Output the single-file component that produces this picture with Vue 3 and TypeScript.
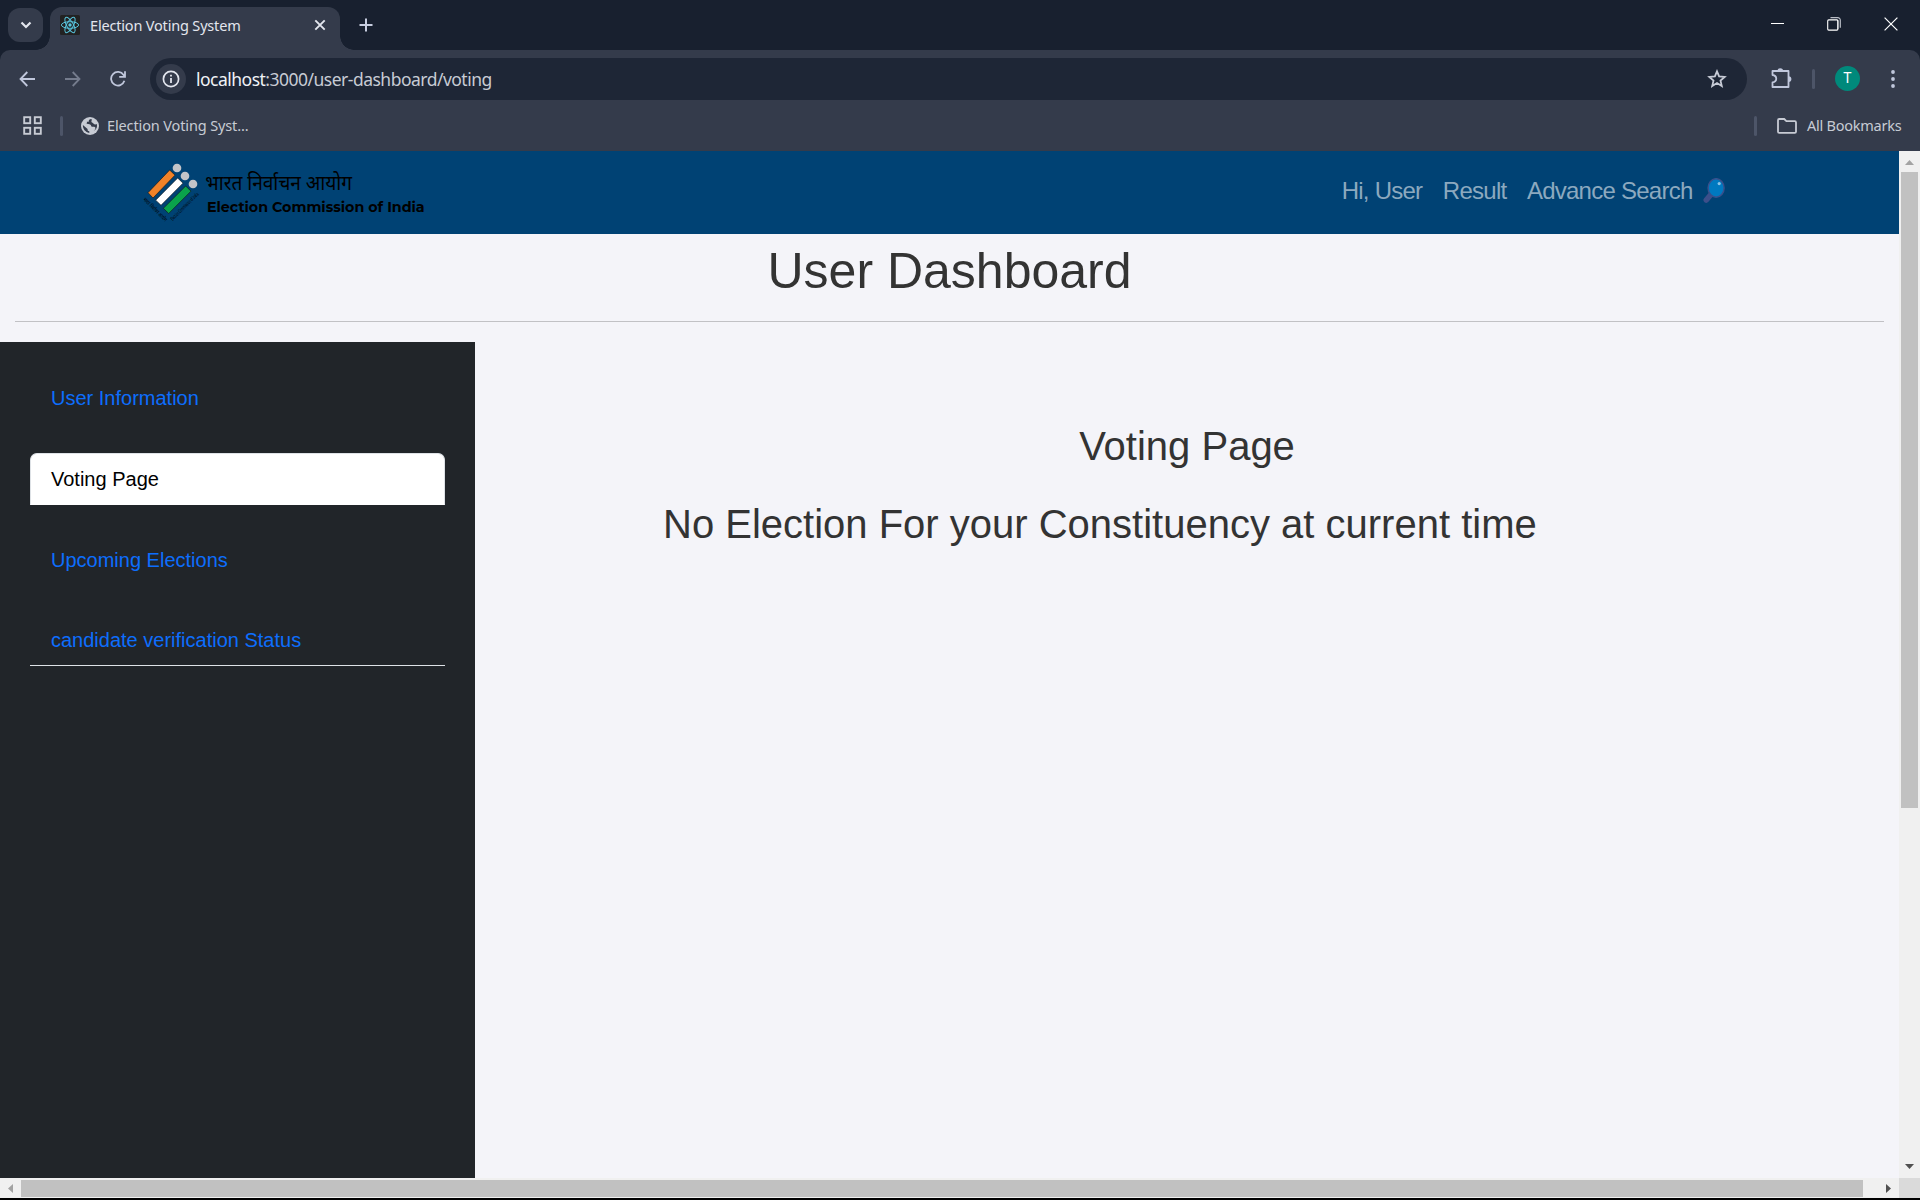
<script setup lang="ts">
import { ref } from 'vue'

interface NavItem {
  id: string
  label: string
}

const address = { host: 'localhost', rest: ':3000/user-dashboard/voting' }

const topLinks: NavItem[] = [
  { id: 'user', label: 'Hi, User' },
  { id: 'result', label: 'Result' },
  { id: 'search', label: 'Advance Search' },
]

const sideLinks: NavItem[] = [
  { id: 'info', label: 'User Information' },
  { id: 'voting', label: 'Voting Page' },
  { id: 'upcoming', label: 'Upcoming Elections' },
  { id: 'status', label: 'candidate verification Status' },
]

const active = ref<string>('voting')
</script>

<template>
  <div class="window">
    <div class="tabstrip">
      <button class="tab-search">
        <svg width="12" height="8" viewBox="0 0 12 8"><path d="M1.5 1.5 6 6l4.5-4.5" fill="none" stroke="#e3e6ee" stroke-width="2.2" /></svg>
      </button>
      <div class="tab">
        <svg class="favicon" width="20" height="20" viewBox="0 0 20 20">
          <rect width="20" height="20" rx="1.5" fill="#222" />
          <g fill="none" stroke="#58c4dc" stroke-width="1">
            <ellipse cx="10" cy="10" rx="8.6" ry="3.3" />
            <ellipse cx="10" cy="10" rx="8.6" ry="3.3" transform="rotate(60 10 10)" />
            <ellipse cx="10" cy="10" rx="8.6" ry="3.3" transform="rotate(120 10 10)" />
          </g>
          <circle cx="10" cy="10" r="1.7" fill="#58c4dc" />
        </svg>
        <span class="tab-title">Election Voting System</span>
        <svg class="tab-close" width="12" height="12" viewBox="0 0 12 12"><path d="M1.3 1.3l9.4 9.4M10.7 1.3l-9.4 9.4" stroke="#e3e6ee" stroke-width="1.9" /></svg>
      </div>
      <svg class="new-tab" width="14" height="14" viewBox="0 0 14 14"><path d="M7 .5v13M.5 7h13" stroke="#c7cde0" stroke-width="2" /></svg>
      <div class="controls">
        <svg width="13" height="14" viewBox="0 0 13 14"><path d="M0 6.5h13" stroke="#fff" /></svg>
        <svg width="14" height="14" viewBox="0 0 14 14"><path d="M3.5 .7h7.3a2.5 2.5 0 0 1 2.5 2.5v7.6M10.8 3v9" fill="none" stroke="#b9bdc6" stroke-width="1.2" /><rect x=".7" y="2.9" width="10.2" height="10.2" rx="1" fill="none" stroke="#fff" stroke-width="1.1" /></svg>
        <svg width="14" height="14" viewBox="0 0 14 14"><path d="M.6 .6l12.8 12.8M13.4 .6.6 13.4" stroke="#fff" stroke-width="1.2" /></svg>
      </div>
    </div>

    <div class="toolbar">
      <svg class="back" width="16" height="16" viewBox="0 0 16 16"><path d="M8.3 1 1.5 8l6.8 7M1.5 8H16" fill="none" stroke="#c0c7dc" stroke-width="1.8" /></svg>
      <svg class="forward" width="16" height="16" viewBox="0 0 16 16"><path d="M7.7 1l6.8 7-6.8 7M14.5 8H0" fill="none" stroke="#757c8d" stroke-width="1.8" /></svg>
      <svg class="reload" width="16" height="16" viewBox="0 0 16 16"><path d="M14.4 9.8A6.8 6.8 0 1 1 13.6 4L15 5.6M15 .3v5.6H9.2" fill="none" stroke="#c0c7dc" stroke-width="1.8" /></svg>
      <div class="omnibox">
        <span class="site-info">
          <svg width="18" height="18" viewBox="0 0 18 18"><circle cx="9" cy="9" r="7.6" fill="none" stroke="#e3e6ee" stroke-width="1.7" /><path d="M9 8v5M9 4.8v1.8" stroke="#e3e6ee" stroke-width="1.8" /></svg>
        </span>
        <span class="url"><b>{{ address.host }}</b>{{ address.rest }}</span>
        <svg class="star" width="20" height="19" viewBox="0 0 20 19"><path d="M10 2.3l2.1 5.1 5.6.5-4.2 3.7 1.3 5.4-4.8-2.9L5.2 17l1.3-5.4-4.2-3.7 5.6-.5z" fill="none" stroke="#c7cbd6" stroke-width="1.8" /></svg>
      </div>
      <svg class="puzzle" width="21" height="21" viewBox="0 0 21 21"><path d="M1.5 3h16v16h-16v-4.6c5-.8 5-6.6 0-7.4z" fill="none" stroke="#c0c7dc" stroke-width="1.8" stroke-linejoin="round" /><path d="M6.5 3a2.8 2.8 0 0 1 5.6 0zM17.5 8.2a2.9 2.9 0 0 1 0 5.8z" fill="#c0c7dc" /></svg>
      <span class="divider"></span>
      <span class="avatar">T</span>
      <svg class="menu" width="4" height="18" viewBox="0 0 4 18"><circle cx="2" cy="2" r="1.9" fill="#c0c7dc" /><circle cx="2" cy="9" r="1.9" fill="#c0c7dc" /><circle cx="2" cy="16" r="1.9" fill="#c0c7dc" /></svg>
    </div>

    <div class="bookmarks">
      <svg width="19" height="19" viewBox="0 0 19 19"><g fill="none" stroke="#c7cbd4" stroke-width="1.9"><rect x="1.2" y="1.2" width="6" height="6" /><rect x="11.8" y="1.2" width="6" height="6" /><rect x="1.2" y="11.8" width="6" height="6" /><rect x="11.8" y="11.8" width="6" height="6" /></g></svg>
      <span class="divider first"></span>
      <svg class="globe" width="18" height="18" viewBox="0 0 18 18"><circle cx="9" cy="9" r="9" fill="#c7cbd4" /><path d="M10.4 2.1c-1.9.1-3 1.2-2.6 2.7H5.9v1.8H4.6c1.5.6 3.8.2 4.9 1.2.9.8.3 1.8 1.7 2 1.2.1 2.6-.2 3.1.8.4 1-.4 2.4-1.6 3.5 2.2-1.4 3.3-3.1 3.3-5.1 0-.8-.1-1.4-.3-1.9-1.3.8-2.5.3-3.3-.7-.6-.8-2-.8-2-1.9 0-.8.9-1.3 0-2.4zM1.9 8.1c-.2 4 2.4 7.2 6.4 7.8v-1.7c-1.4-.1-1.8-.9-1.7-2.3z" fill="#343b4b" /></svg>
      <span class="bm-title">Election Voting Syst...</span>
      <span class="divider last"></span>
      <svg class="folder" width="20" height="16" viewBox="0 0 20 16"><path d="M1 2.2Q1 1 2.2 1h5l2.2 2.2h8.4q1.2 0 1.2 1.2v9.3q0 1.2-1.2 1.2H2.2Q1 14.9 1 13.7z" fill="none" stroke="#c7cbd4" stroke-width="1.8" /></svg>
      <span class="all-bm">All Bookmarks</span>
    </div>

    <div class="viewport">
      <div class="page">
        <header class="navbar">
          <svg class="logo" width="300" height="83" viewBox="0 3 900 249">
            <g stroke="#10161c" stroke-width="2">
              <path d="M119 60l16 15.5-66 68.5-15-16z" fill="#f08228" />
              <path d="M143 84l16 15.5-66 66.5-16-15.5z" fill="#fff" />
              <path d="M167 108l16 15.5-67 67-16-15.5z" fill="#0aa24b" />
            </g>
            <g fill="#c3c4c8"><circle cx="141" cy="54" r="13" /><circle cx="165" cy="78" r="13" /><circle cx="189" cy="102" r="13" /></g>
            <text class="motto" transform="translate(38 149) rotate(45)" textLength="94" lengthAdjust="spacingAndGlyphs" font-size="16">भारत निर्वाचन आयोग</text>
            <text class="motto" transform="translate(128 213) rotate(-45)" textLength="112" lengthAdjust="spacingAndGlyphs" font-size="16">Election Commission of India</text>
            <text class="hindi" x="226" y="121" textLength="440" lengthAdjust="spacingAndGlyphs" font-size="60">भारत निर्वाचन आयोग</text>
            <text class="english" x="231" y="186" textLength="653" lengthAdjust="spacingAndGlyphs" font-size="43">Election Commission of India</text>
          </svg>
          <nav class="links">
            <a v-for="link in topLinks" :key="link.id">{{ link.label }}</a>
            <svg class="glass" width="22" height="26" viewBox="0 0 22 26"><path d="M7.5 17 3.3 22" stroke="#3d4f8a" stroke-width="5.6" stroke-linecap="round" /><ellipse cx="13.1" cy="10" rx="8" ry="9.3" fill="#0079c0" stroke="#38508c" stroke-width="1.5" /><circle cx="16.2" cy="5.6" r="1.6" fill="#8cc4e6" /></svg>
          </nav>
        </header>
        <h1>User Dashboard</h1>
        <hr />
        <div class="body">
          <aside class="sidebar">
            <div class="side-nav">
              <a v-for="link in sideLinks" :key="link.id" class="side-link" :class="{ active: link.id === active }" @click="active = link.id">{{ link.label }}</a>
            </div>
          </aside>
          <main class="content">
            <h2 class="title">Voting Page</h2>
            <h2 class="notice">No Election For your Constituency at current time</h2>
          </main>
        </div>
      </div>
      <div class="vscroll">
        <svg class="up" width="9" height="5" viewBox="0 0 9 5"><path d="M4.5 0 9 5H0z" fill="#a3a3a3" /></svg>
        <div class="vthumb"></div>
        <svg class="down" width="9" height="5" viewBox="0 0 9 5"><path d="M0 0h9L4.5 5z" fill="#505050" /></svg>
      </div>
      <div class="hscroll">
        <svg width="5" height="9" viewBox="0 0 5 9"><path d="M5 0v9L0 4.5z" fill="#a3a3a3" /></svg>
        <div class="hthumb"></div>
        <svg width="5" height="9" viewBox="0 0 5 9"><path d="M0 0v9l5-4.5z" fill="#505050" /></svg>
      </div>
      <div class="corner"></div>
    </div>
  </div>
</template>

<style>
body {
  background: #000;
  overflow: hidden;
}
</style>

<style scoped>
* {
  box-sizing: border-box;
}
.window {
  width: 1920px;
  height: 1200px;
  display: flex;
  flex-direction: column;
  background: linear-gradient(#18202f 0 100px, #000 100px);
  font-family: "Noto Sans", "Open Sans", sans-serif;
}
svg {
  display: block;
  flex: none;
}
span {
  white-space: nowrap;
}
.tabstrip {
  height: 50px;
  display: flex;
  background: #18202f;
}
.tab-search {
  width: 35px;
  height: 34px;
  margin: 8px 7px 0 8px;
  padding: 0;
  border: 0;
  border-radius: 12px;
  background: #343b4b;
  display: flex;
  align-items: center;
  justify-content: center;
}
.tab {
  position: relative;
  width: 290px;
  height: 43px;
  margin-top: 7px;
  padding: 0 14px 7px 10px;
  border-radius: 12px 12px 0 0;
  background: #343b4b;
  display: flex;
  align-items: center;
}
.tab::before,
.tab::after {
  content: "";
  position: absolute;
  bottom: 0;
  width: 14px;
  height: 14px;
}
.tab::before {
  left: -14px;
  background: radial-gradient(circle at 0 0, transparent 13.5px, #343b4b 14px);
}
.tab::after {
  right: -14px;
  background: radial-gradient(circle at 100% 0, transparent 13.5px, #343b4b 14px);
}
.tab-title {
  width: 160px;
  margin-left: 10px;
  font-size: 14.5px;
  letter-spacing: -0.18px;
  color: #e3e6ee;
}
.tab-close {
  margin-left: auto;
}
.new-tab {
  margin: 18px 0 0 19px;
}
.controls {
  display: flex;
  gap: 43px;
  margin: 17px 22px 0 auto;
}
.toolbar {
  height: 57px;
  display: flex;
  align-items: center;
  background: #343b4b;
  border-radius: 10px 10px 0 0;
}
.back {
  margin-left: 19px;
}
.forward {
  margin-left: 30px;
}
.reload {
  margin: 0 24px 0 29px;
}
.omnibox {
  width: 1597px;
  height: 42px;
  padding: 0 20px 0 6px;
  border-radius: 21px;
  background: #1e2636;
  display: flex;
  align-items: center;
}
.site-info {
  width: 30px;
  height: 30px;
  border-radius: 50%;
  background: #343b4b;
  display: flex;
  align-items: center;
  justify-content: center;
}
.url {
  margin-left: 10px;
  font-size: 17.5px;
  letter-spacing: -0.51px;
  color: #c7cbd4;
}
.url b {
  font-weight: 400;
  color: #f0f2f7;
}
.star {
  margin-left: auto;
}
.puzzle {
  margin-left: 24px;
}
.divider {
  width: 3px;
  height: 20px;
  border-radius: 2px;
  background: #4d5568;
}
.toolbar .divider {
  margin-left: 20px;
}
.avatar {
  width: 25px;
  height: 25px;
  margin-left: 20px;
  border-radius: 50%;
  background: #00897b;
  color: #fff;
  font: 14px/25px Roboto, sans-serif;
  text-align: center;
}
.menu {
  margin-left: 31px;
}
.bookmarks {
  height: 44px;
  padding: 0 18px 7px 23px;
  display: flex;
  align-items: center;
  background: #343b4b;
}
.divider.first {
  margin-left: 18px;
}
.globe {
  margin-left: 18px;
}
.bm-title,
.all-bm {
  padding-bottom: 1px;
  font-size: 14.5px;
  letter-spacing: -0.13px;
  color: #c7cbd4;
}
.bm-title {
  margin-left: 8px;
}
.divider.last {
  margin-left: auto;
}
.folder {
  margin-left: 20px;
}
.all-bm {
  width: 95px;
  margin-left: 10px;
  letter-spacing: -0.25px;
}
.viewport {
  height: 1047px;
  display: grid;
  grid-template: 1027px 20px / 1899px 21px;
  font-family: "Liberation Sans", Arial, sans-serif;
}
.page {
  overflow: hidden;
  background: #f4f4f9;
  color: #333;
  display: flex;
  flex-direction: column;
}
.navbar {
  height: 83px;
  padding: 0 174px 0 130px;
  display: flex;
  justify-content: space-between;
  background: #004274;
}
.logo {
  overflow: visible;
}
.motto,
.hindi {
  font-family: "Noto Sans Devanagari", "Noto Sans", sans-serif;
}
.english {
  font-family: Montserrat, Inter, sans-serif;
  font-weight: 700;
}
.links {
  display: flex;
  align-items: center;
  gap: 20.5px;
  padding-bottom: 3px;
  font-size: 24px;
  letter-spacing: -0.75px;
  color: #8ca9bf;
}
.links a {
  white-space: nowrap;
}
.glass {
  margin-left: -10px;
}
h1 {
  margin: 7px 0 0;
  font-size: 50px;
  line-height: 60px;
  font-weight: 400;
  text-align: center;
}
hr {
  flex: none;
  width: 1869px;
  height: 1px;
  margin: 20px 15px 20px;
  border: 0;
  background: #c1c1c5;
}
.body {
  flex: 1;
  display: flex;
}
.sidebar {
  width: 475px;
  padding: 30px;
  background: #212529;
}
.side-nav {
  height: 294px;
  border-bottom: 1px solid #dee2e6;
}
.side-link {
  display: block;
  height: 52px;
  margin-bottom: 28.8px;
  padding: 10px 20px;
  border: 1px solid transparent;
  border-radius: 7px 7px 0 0;
  font-size: 20px;
  line-height: 30px;
  color: #0d6efd;
}
.side-link:last-child {
  margin-bottom: 0;
}
.side-link.active {
  background: #fff;
  border-color: #dee2e6 #dee2e6 #fff;
  color: #000;
}
.content {
  flex: 1;
  padding-top: 80px;
}
.content h2 {
  margin: 0 0 30px;
  font-size: 40px;
  line-height: 48px;
  font-weight: 400;
}
.title {
  text-align: center;
}
.content .notice {
  margin-left: 188px;
}
.vscroll {
  background: #f0f0f0;
  display: flex;
  flex-direction: column;
  align-items: center;
}
.up {
  margin: 9px 0 7px;
}
.vthumb {
  width: 17px;
  height: 636px;
  background: #c1c1c1;
}
.down {
  margin: auto 0 9px;
}
.hscroll {
  background: #f0f0f0;
  display: flex;
  align-items: center;
  padding: 0 8px;
}
.hthumb {
  width: 1842px;
  height: 17px;
  margin: 0 auto 0 8px;
  background: #c1c1c1;
}
.corner {
  background: #dadada;
}
</style>
